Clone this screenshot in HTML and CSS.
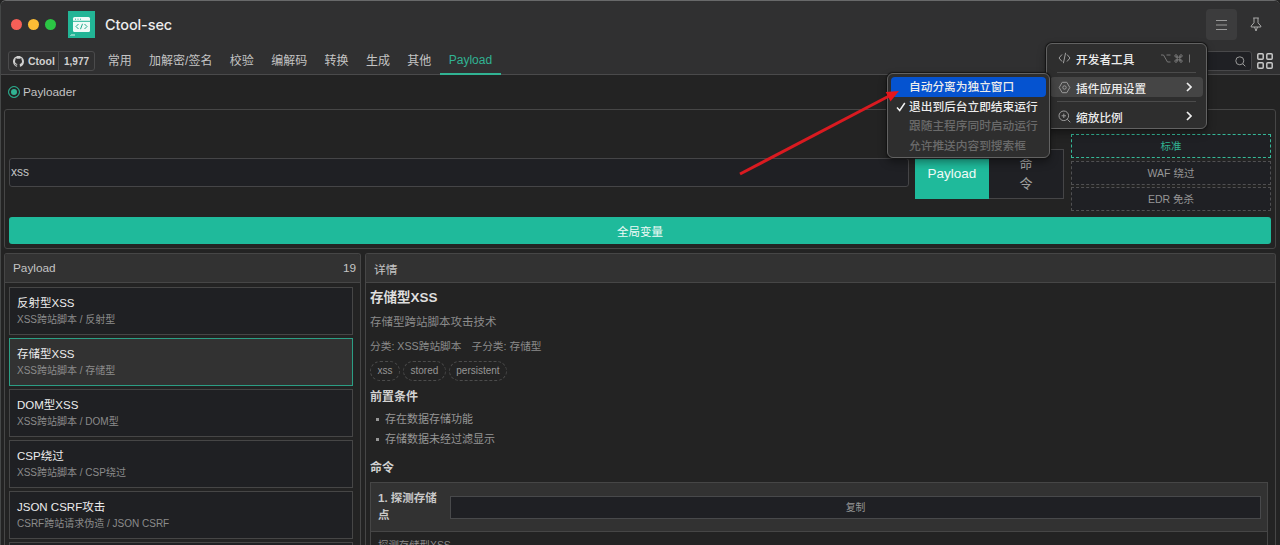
FILE: index.html
```html
<!DOCTYPE html>
<html lang="zh-CN">
<head>
    <meta charset="utf-8">
    <title>Ctool-sec</title>
    <link rel="stylesheet" href="styles.css">
</head>
<body>
<div class="window">
    <!-- Title bar -->
    <header class="titlebar">
        <div class="lights">
            <span class="light red"></span>
            <span class="light yellow"></span>
            <span class="light green"></span>
        </div>
        <svg class="logo" width="27" height="27" viewBox="0 0 27 27">
            <rect width="27" height="27" fill="#22b596"/>
            <rect x="5" y="6" width="17" height="15" rx="1.5" fill="#effaf7"/>
            <path d="M5 10.3h17" stroke="#22b596" stroke-width="1"/>
            <path d="M7 8.2h1M9.500 8.200h1M12 8.200h1" stroke="#22b596" stroke-width="1"/>
            <path d="M10.500 13l-2.500 2.500 2.500 2.500M16.500 13l2.500 2.500-2.500 2.500M14.500 12.800l-2 5.400" fill="none" stroke="#22a98c" stroke-width="1"/>
            <path d="M2 24.500h5M3 23.500h4" stroke="#a5e3d5" stroke-width=".7"/>
        </svg>
        <h1 class="app-name">Ctool-sec</h1>
        <div class="window-actions">
            <button class="icon-btn active">
                <svg width="13" height="12" viewBox="0 0 13 12"><path d="M1 1.500h11M1 6h11M1 10.500h11" stroke="#9a9a9a" stroke-width="1"/></svg>
            </button>
            <button class="icon-btn">
                <svg width="12" height="15" viewBox="0 0 12 15" fill="none" stroke="#a8a8a8" stroke-width="1" stroke-linejoin="round"><path d="M3.200 1h5.600M4 1v4.800L1.200 9v1h9.600V9L8 5.800V1M4.500 10L6 14l1.500-4"/></svg>
            </button>
        </div>
    </header>

    <!-- Tabs -->
    <nav class="tabs">
        <div class="badge">
            <span class="badge-name">
                <svg width="11" height="11" viewBox="0 0 16 16" fill="#d0d0d0"><path d="M8 0C3.580 0 0 3.580 0 8c0 3.540 2.290 6.530 5.470 7.590.4.070.55-.17.55-.38 0-.19-.010-.82-.010-1.490-2.010.37-2.530-.49-2.690-.94-.09-.23-.48-.94-.82-1.130-.28-.15-.68-.52-.010-.53.63-.010 1.080.58 1.230.82.72 1.210 1.870.87 2.330.66.070-.52.28-.87.51-1.070-1.780-.2-3.640-.89-3.640-3.950 0-.87.31-1.590.82-2.150-.08-.2-.36-1.020.08-2.120 0 0 .67-.21 2.200.82.64-.18 1.320-.27 2-.27s1.360.09 2 .27c1.530-1.040 2.200-.82 2.200-.82.44 1.100.16 1.920.08 2.120.51.56.82 1.270.82 2.150 0 3.070-1.870 3.750-3.650 3.950.29.25.54.73.54 1.480 0 1.070-.010 1.930-.010 2.200 0 .21.15.46.55.38A8.010 8.010 0 0 0 16 8c0-4.420-3.580-8-8-8z"/></svg>
                Ctool
            </span>
            <span class="badge-count">1,977</span>
        </div>
        <a class="tab">常用</a>
        <a class="tab">加解密/签名</a>
        <a class="tab">校验</a>
        <a class="tab">编解码</a>
        <a class="tab">转换</a>
        <a class="tab">生成</a>
        <a class="tab">其他</a>
        <a class="tab current">Payload</a>
        <div class="tabs-right">
            <div class="quick-search">
                <svg width="11" height="11" viewBox="0 0 11 11" fill="none" stroke="#9a9a9a"><circle cx="4.800" cy="4.800" r="4"/><path d="M7.700 7.700l2.600 2.600"/></svg>
            </div>
            <svg width="16" height="16" viewBox="0 0 16 16" fill="none" stroke="#c9c9c9" stroke-width="1.500"><rect x=".8" y=".8" width="5.400" height="5.400" rx="1"/><rect x="9.800" y=".8" width="5.400" height="5.400" rx="1"/><rect x=".8" y="9.800" width="5.400" height="5.400" rx="1"/><rect x="9.800" y="9.800" width="5.400" height="5.400" rx="1"/></svg>
        </div>
    </nav>

    <main class="content">
        <div class="tool-row">
            <span class="radio"></span>
            <span>Payloader</span>
        </div>

        <!-- Search panel -->
        <section class="panel search-panel">
            <div class="search-row">
                <div class="search-input">xss</div>
                <div class="switch">
                    <div class="switch-item on">Payload</div>
                    <div class="switch-item">命<br>令</div>
                </div>
                <div class="modes">
                    <div class="mode on">标准</div>
                    <div class="mode">WAF 绕过</div>
                    <div class="mode">EDR 免杀</div>
                </div>
            </div>
            <button class="primary">全局变量</button>
        </section>

        <div class="columns">
            <!-- Payload list -->
            <section class="panel list-panel">
                <div class="panel-head"><span>Payload</span><span>19</span></div>
                <div class="list">
                    <div class="item">
                        <div class="item-title">反射型XSS</div>
                        <div class="item-sub">XSS跨站脚本 / 反射型</div>
                    </div>
                    <div class="item selected">
                        <div class="item-title">存储型XSS</div>
                        <div class="item-sub">XSS跨站脚本 / 存储型</div>
                    </div>
                    <div class="item">
                        <div class="item-title">DOM型XSS</div>
                        <div class="item-sub">XSS跨站脚本 / DOM型</div>
                    </div>
                    <div class="item">
                        <div class="item-title">CSP绕过</div>
                        <div class="item-sub">XSS跨站脚本 / CSP绕过</div>
                    </div>
                    <div class="item">
                        <div class="item-title">JSON CSRF攻击</div>
                        <div class="item-sub">CSRF跨站请求伪造 / JSON CSRF</div>
                    </div>
                    <div class="item"></div>
                </div>
            </section>

            <!-- Details -->
            <section class="panel detail-panel">
                <div class="panel-head"><span>详情</span></div>
                <div class="detail">
                    <h2 class="detail-title">存储型XSS</h2>
                    <p class="detail-desc">存储型跨站脚本攻击技术</p>
                    <div class="meta"><span>分类: XSS跨站脚本</span><span>子分类: 存储型</span></div>
                    <div class="tags">
                        <span class="tag">xss</span>
                        <span class="tag">stored</span>
                        <span class="tag">persistent</span>
                    </div>
                    <h3 class="section-title">前置条件</h3>
                    <ul class="conditions">
                        <li>存在数据存储功能</li>
                        <li>存储数据未经过滤显示</li>
                    </ul>
                    <h3 class="section-title">命令</h3>
                    <div class="command">
                        <div class="command-head">
                            <span class="command-name">1. 探测存储点</span>
                            <button class="copy">复制</button>
                        </div>
                        <div class="command-body">探测存储型XSS</div>
                    </div>
                </div>
            </section>
        </div>
    </main>

    <!-- Main menu -->
    <div class="menu main-menu">
        <div class="menu-row">
            <svg width="13" height="12" viewBox="0 0 13 12" fill="none" stroke="#a0a0a0"><path d="M4 2.500L1 6l3 3.500M9 2.500L12 6 9 9.500M7.600.8L5.400 11.200"/></svg>
            <span class="label">开发者工具</span>
            <svg class="shortcut" width="31" height="9" viewBox="0 0 31 9" fill="none" stroke="#777"><path d="M0 1h2.500l4 7H9.500M5.500 1h4"/><path d="M15 3.200h5M15 5.800h5M16.200 2v5M18.800 2v5"/><circle cx="15" cy="1.900" r="1.200"/><circle cx="20" cy="1.900" r="1.200"/><circle cx="15" cy="7.100" r="1.200"/><circle cx="20" cy="7.100" r="1.200"/><path d="M28.500.5v8"/></svg>
        </div>
        <div class="divider"></div>
        <div class="menu-row hover">
            <svg width="13" height="13" viewBox="0 0 13 13" fill="none" stroke="#9a9a9a"><path d="M4.200 1.300h4.600l3 5.200-3 5.200H4.200l-3-5.200z" stroke-linejoin="round"/><circle cx="6.500" cy="6.500" r="1.700"/></svg>
            <span class="label">插件应用设置</span>
            <svg class="chevron" width="6" height="10" viewBox="0 0 6 10" fill="none" stroke="#eee" stroke-width="1.700"><path d="M1 1l4 4-4 4"/></svg>
        </div>
        <div class="divider"></div>
        <div class="menu-row">
            <svg width="13" height="13" viewBox="0 0 13 13" fill="none" stroke="#9a9a9a"><circle cx="5.800" cy="5.800" r="4.800"/><path d="M9.300 9.300l3 3M3.600 5.800H8M5.800 3.600V8"/></svg>
            <span class="label">缩放比例</span>
            <svg class="chevron" width="6" height="10" viewBox="0 0 6 10" fill="none" stroke="#eee" stroke-width="1.700"><path d="M1 1l4 4-4 4"/></svg>
        </div>
    </div>

    <!-- Submenu -->
    <div class="menu sub-menu">
        <div class="sub-row chosen">自动分离为独立窗口</div>
        <div class="sub-row">
            <svg class="check" width="10" height="10" viewBox="0 0 10 10" fill="none" stroke="#f0f0f0" stroke-width="1.500"><path d="M1 5.500l2.700 3L8.800 1"/></svg>
            退出到后台立即结束运行
        </div>
        <div class="sub-row disabled">跟随主程序同时启动运行</div>
        <div class="sub-row disabled">允许推送内容到搜索框</div>
    </div>

    <!-- Pointer arrow -->
    <svg class="arrow" width="166" height="90" viewBox="0 0 166 90">
        <path d="M3 87L154 8" stroke="#d91a20" stroke-width="3"/>
        <path d="M162 4l-8.500 10.500-4.800-9.500z" fill="#e5161c"/>
    </svg>
</div>
</body>
</html>
```
FILE: styles.css
```css
* {
    box-sizing: border-box;
}
body {
    margin: 0;
    background: #232323;
    color: #c4c4c4;
    font-family: "Liberation Sans", "Noto Sans CJK SC", sans-serif;
    font-size: 12px;
    overflow: hidden;
}
h1, h2, h3, p, ul {
    margin: 0;
    padding: 0;
}
button {
    font-family: inherit;
    border: 0;
    padding: 0;
}
svg {
    flex: none;
    display: block;
}
.window {
    position: relative;
    height: 545px;
    display: flex;
    flex-direction: column;
    overflow: hidden;
    border-top: 1px solid #68696a;
    border-left: 1px solid #454747;
    border-radius: 6px 6px 0 0;
}

/* title bar */
.titlebar {
    flex: none;
    height: 47px;
    display: flex;
    align-items: center;
    padding: 0 9px 0 10px;
    background: #303031;
}
.lights {
    display: flex;
    gap: 6px;
}
.light {
    width: 11px;
    height: 11px;
    border-radius: 50%;
}
.red { background: #f65f57; }
.yellow { background: #fbbc35; }
.green { background: #2bc544; }
.logo {
    margin-left: 12px;
}
.app-name {
    margin-left: 10px;
    font-family: Inter, sans-serif;
    font-size: 14.5px;
    font-weight: 500;
    letter-spacing: -0.1px;
    color: #ececec;
}
.window-actions {
    margin-left: auto;
    display: flex;
    gap: 3px;
}
.icon-btn {
    width: 31px;
    height: 31px;
    display: flex;
    align-items: center;
    justify-content: center;
    background: none;
    border-radius: 4px;
}
.icon-btn.active {
    background: #3c3c3d;
}

/* tabs */
.tabs {
    flex: none;
    height: 27px;
    display: flex;
    padding: 0 7px;
    background: #303031;
    border-bottom: 1px solid #4a4a4b;
}
.badge {
    display: flex;
    width: 87px;
    height: 20px;
    margin: 3px 4px 0 0;
    border: 1px solid #4b4b4c;
    border-radius: 3px;
    font-size: 10.5px;
    font-weight: bold;
    color: #d0d0d0;
}
.badge-name {
    width: 50px;
    display: flex;
    align-items: center;
    gap: 4px;
    padding-left: 4px;
    border-right: 1px solid #4b4b4c;
}
.badge-count {
    flex: 1;
    text-align: center;
    line-height: 19px;
    font-size: 10px;
}
.tab {
    height: 27px;
    padding: 0 8.700px;
    line-height: 26px;
    white-space: nowrap;
}
.tab.current {
    color: #31b393;
    line-height: 25px;
    border-bottom: 2px solid #31b393;
}
.tabs-right {
    margin: 3px 0 0 auto;
    display: flex;
    gap: 5px;
    align-items: center;
    height: 20px;
}
.quick-search {
    width: 180px;
    height: 20px;
    display: flex;
    align-items: center;
    justify-content: flex-end;
    padding-right: 5px;
    background: #1f2024;
    border: 1px solid #48484a;
    border-radius: 3px;
}

/* content */
.content {
    flex: 1;
    min-height: 0;
    display: flex;
    flex-direction: column;
    padding: 0 4px 0 3px;
}
.tool-row {
    flex: none;
    height: 34px;
    display: flex;
    align-items: center;
    gap: 3px;
    padding-left: 4px;
    font-size: 11.800px;
}
.radio {
    width: 12px;
    height: 12px;
    border: 1px solid #2ba88b;
    border-radius: 50%;
    background: #31b393;
    box-shadow: inset 0 0 0 2px #232323;
}
.panel {
    border: 1px solid #464646;
    border-radius: 3px;
}
.search-panel {
    flex: none;
    height: 140px;
    padding: 24px 4px 4px;
    display: flex;
    flex-direction: column;
    justify-content: space-between;
}
.search-row {
    display: flex;
    align-items: center;
    height: 77px;
}
.search-input {
    flex: 1;
    height: 29px;
    line-height: 27px;
    padding-left: 1px;
    background: #1f2024;
    border: 1px solid #454547;
    border-radius: 3px;
}
.switch {
    width: 149px;
    height: 50px;
    margin: 3px 7px 0 6px;
    display: flex;
    background: #1f2024;
    border: 1px solid #454547;
    border-left: 0;
}
.switch-item {
    flex: 1;
    display: flex;
    align-items: center;
    justify-content: center;
    font-size: 13px;
    line-height: 20px;
    color: #a0a0a0;
}
.switch-item.on {
    margin: -1px 0;
    font-size: 13.500px;
    background: #1fba9b;
    color: #effaf7;
}
.modes {
    width: 200px;
    display: flex;
    flex-direction: column;
    gap: 2.500px;
}
.mode {
    height: 24px;
    line-height: 22px;
    font-size: 10.500px;
    text-align: center;
    color: #969696;
    background: #1f2024;
    border: 1px dashed #505052;
}
.mode.on {
    color: #31b393;
    border-color: #35b898;
}
.primary {
    height: 27px;
    font-size: 11.500px;
    background: #1fba9b;
    color: #effaf7;
    border-radius: 3px;
}

.columns {
    flex: 1;
    min-height: 0;
    display: flex;
    gap: 4px;
    margin-top: 4px;
}
.columns .panel {
    border-bottom: 0;
    border-radius: 3px 3px 0 0;
    overflow: hidden;
}
.list-panel {
    width: 357px;
}
.detail-panel {
    flex: 1;
}
.panel-head {
    height: 29px;
    display: flex;
    align-items: center;
    justify-content: space-between;
    padding: 0 4px 0 8px;
    background: #323232;
    border-bottom: 1px solid #464646;
    font-size: 11.800px;
}
.list {
    display: flex;
    flex-direction: column;
    gap: 3px;
    padding: 4px 7px 0 4px;
}
.item {
    flex: none;
    height: 48px;
    padding: 6px 7px;
    background: #1f2023;
    border: 1px solid #464646;
}
.item.selected {
    background: #323232;
    border-color: #2c9e84;
}
.item-title {
    font-size: 11.500px;
    line-height: 18px;
    color: #ececec;
}
.item-sub {
    font-size: 10px;
    line-height: 16px;
    color: #8b8b8b;
}

/* details */
.detail {
    padding: 0 7px 0 4px;
}
.detail-title {
    padding-top: 6px;
    font-size: 13.500px;
    line-height: 18px;
    color: #dedede;
}
.detail-desc {
    margin-top: 7px;
    font-size: 11.500px;
    line-height: 16px;
    color: #8b8b8b;
}
.meta {
    display: flex;
    gap: 10px;
    margin-top: 8px;
    font-size: 10.700px;
    line-height: 16px;
    color: #8b8b8b;
}
.tags {
    display: flex;
    gap: 3px;
    margin-top: 7px;
}
.tag {
    height: 20px;
    padding: 0 6.500px;
    line-height: 18px;
    font-size: 10px;
    color: #969696;
    border: 1px dashed #4c4c4c;
    border-radius: 10px;
}
.section-title {
    margin-top: 7px;
    font-size: 12px;
    line-height: 18px;
    color: #d2d2d2;
}
.conditions {
    list-style: none;
    margin: 3px 0 10px;
}
.conditions li {
    display: flex;
    align-items: center;
    gap: 6px;
    padding-left: 6px;
    font-size: 11px;
    line-height: 20px;
    color: #969696;
}
.conditions li::before {
    content: "";
    width: 3px;
    height: 3px;
    background: #969696;
}
.command {
    margin-top: 5px;
    border: 1px solid #464646;
}
.command-head {
    height: 49px;
    display: flex;
    align-items: center;
    padding: 0 6px 0 7px;
    background: #323232;
    border-bottom: 1px solid #464646;
}
.command-name {
    width: 60px;
    margin-right: 12px;
    font-size: 11.500px;
    line-height: 17px;
    font-weight: bold;
    color: #c8c8c8;
}
.copy {
    flex: 1;
    height: 23px;
    font-size: 9.800px;
    color: #969696;
    background: #1f2024;
    border: 1px solid #48494b;
}
.command-body {
    padding: 6px 7px;
    font-size: 10.400px;
    line-height: 16px;
    color: #8b8b8b;
}

/* menus */
.menu {
    position: absolute;
    background: #2e2e2e;
    border: 1px solid #626262;
    border-radius: 6px;
    box-shadow: 0 0 1px 1px #151515, 0 4px 8px rgba(0, 0, 0, .4);
    font-size: 11.700px;
    font-weight: 500;
    color: #ececec;
}
.main-menu {
    left: 1045px;
    top: 42px;
    width: 161px;
    height: 86px;
    padding: 4px 3px;
}
.menu-row {
    height: 20px;
    display: flex;
    align-items: center;
    padding: 0 11px 0 8px;
    border-radius: 4px;
}
.menu-row.hover {
    background: #454545;
}
.label {
    margin-left: 5px;
}
.shortcut, .chevron {
    margin-left: auto;
}
.divider {
    height: 1px;
    margin: 4px 7px;
    background: #4b4b4b;
}
.sub-menu {
    left: 886px;
    top: 72px;
    width: 163px;
    height: 85px;
    padding: 3px;
}
.sub-row {
    position: relative;
    height: 19.500px;
    line-height: 19px;
    padding-left: 18px;
    border-radius: 4px;
    white-space: nowrap;
}
.sub-row.chosen {
    background: #0553d0;
}
.sub-row.disabled {
    color: #6a6a6a;
}
.check {
    position: absolute;
    left: 5px;
    top: 5px;
}
.arrow {
    position: absolute;
    left: 736px;
    top: 86px;
}
```
